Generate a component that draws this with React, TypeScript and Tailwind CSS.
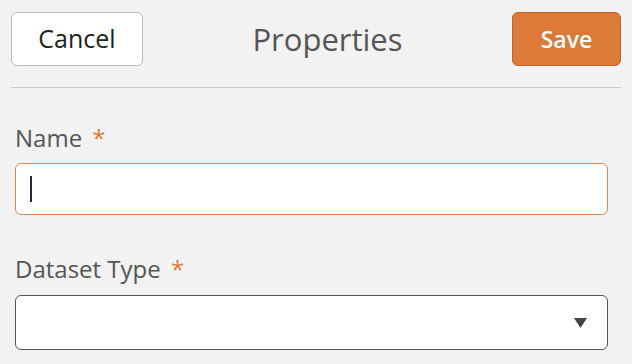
export default function App() {
  return (
    <main
      className="min-h-screen bg-[#f2f2f2] text-[#555]"
      style={{ fontFamily: '"Open Sans", "Noto Sans", sans-serif' }}
    >
      <header className="px-[11px] pt-3">
        <div className="flex items-center justify-between">
          <button className="h-[54px] w-[132px] rounded-md border border-[#bcbcbc] bg-white text-[25px] text-[#222]">
            Cancel
          </button>
          <h1 className="text-[31px] text-[#555]">Properties</h1>
          <button className="h-[54px] w-[109px] rounded-md border border-[#b9652d] bg-[#dc7a3a] text-[23px] font-semibold text-white">
            Save
          </button>
        </div>
        <div className="mt-[21px] border-t border-[#cccccc]"></div>
      </header>

      {/* form fields */}
      <section className="flex flex-col pl-[15px] pr-[24px] pt-[34px]">
        <label className="mb-[9px] text-[24px] leading-8">
          Name <span className="ml-1 text-[#e07b39]">*</span>
        </label>
        <div className="flex h-[52px] items-center rounded-md border border-[#e08543] bg-white px-[14px]">
          <span className="h-[26px] w-[2px] bg-[#1f2937]"></span>
        </div>

        <label className="mb-[10px] mt-[38px] text-[24px] leading-8">
          Dataset Type <span className="ml-1 text-[#e07b39]">*</span>
        </label>
        <div className="flex h-[55px] items-center justify-end rounded-md border border-[#555] bg-white pr-[20px]">
          <svg width="13" height="10" viewBox="0 0 13 10">
            <path d="M0 0 L13 0 L6.5 10 Z" fill="#444" />
          </svg>
        </div>
      </section>
    </main>
  );
}
